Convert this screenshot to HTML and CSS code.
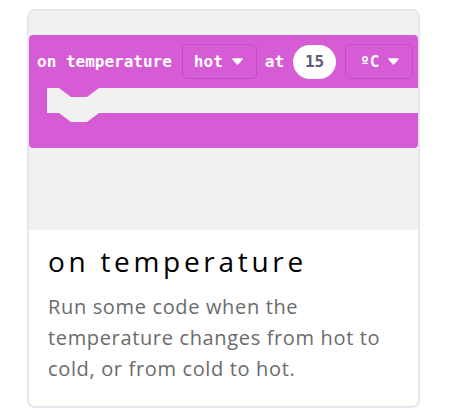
FILE: index.html
```html
<!DOCTYPE html>
<html>
<head>
<meta charset="utf-8">
<link rel="stylesheet" href="styles.css">
</head>
<body>
<div class="card">
  <div class="preview">
    <div class="block">
      <div class="block-head">
        <span class="label">on temperature</span>
        <span class="dropdown">hot <svg class="caret" width="11" height="7" viewBox="0 0 11 7"><path d="M1 1 L10 1 L5.5 6 Z" fill="#fff" stroke="#fff" stroke-width="1.5" stroke-linejoin="round"/></svg></span>
        <span class="label">at</span>
        <span class="pill">15</span>
        <span class="dropdown">ºC <svg class="caret" width="11" height="7" viewBox="0 0 11 7"><path d="M1 1 L10 1 L5.5 6 Z" fill="#fff" stroke="#fff" stroke-width="1.5" stroke-linejoin="round"/></svg></span>
      </div>
      <div class="block-mid">
        <div class="arm"></div>
        <div class="slot"><div class="tab"></div></div>
      </div>
      <div class="block-foot"><div class="notch"></div></div>
    </div>
  </div>
  <div class="info">
    <h2 class="title">on temperature</h2>
    <p class="desc">Run some code when the temperature changes from hot to cold, or from cold to hot.</p>
  </div>
</div>
</body>
</html>
```

FILE: styles.css
```css
html, body {
  margin: 0;
  padding: 0;
  background: #ffffff;
}
body {
  padding: 9px 0 0 27px;
}
.card {
  box-sizing: border-box;
  width: 393px;
  height: 399px;
  border: 2px solid #e4e8ee;
  border-radius: 8px;
  overflow: hidden;
  background: #ffffff;
}
.preview {
  height: 219px;
  background: #f1f1f1;
  padding-top: 24px;
  box-sizing: border-box;
}
.block {
  width: 100%;
}
.block-head {
  height: 53px;
  background: #d65cd6;
  border-radius: 4px 4px 0 0;
  display: flex;
  align-items: center;
  padding-left: 8px;
  font-family: "DejaVu Sans Mono", monospace;
  font-weight: bold;
  font-size: 16px;
  color: #ffffff;
  box-sizing: border-box;
}
.label {
  line-height: 1;
}
.dropdown {
  height: 35px;
  box-sizing: border-box;
  border: 1px solid #bf4fbf;
  border-radius: 5px;
  display: flex;
  align-items: center;
  gap: 9px;
  padding: 0 13px 0 11px;
  margin-left: 10px;
}
.label + .pill {
  margin-left: 9px;
}
.dropdown + .label {
  margin-left: 8px;
}
.pill + .dropdown {
  margin-left: 9px;
  padding: 0 13px 0 14px;
}
.caret {
  display: block;
}
.pill {
  width: 43px;
  height: 34px;
  border-radius: 17px;
  background: #ffffff;
  color: #575e75;
  display: flex;
  align-items: center;
  justify-content: center;
}
.block-mid {
  display: flex;
  height: 25px;
}
.arm {
  width: 18px;
  background: #d65cd6;
}
.slot {
  flex: 1;
  background: #f1f1f1;
  border-radius: 5px 0 0 5px;
  position: relative;
}
.tab {
  position: absolute;
  left: 12px;
  top: 0;
  width: 40px;
  height: 9px;
  background: #d65cd6;
  clip-path: polygon(0 0, 12px 100%, 28px 100%, 100% 0);
}
.block-foot {
  height: 35px;
  background: #d65cd6;
  border-radius: 0 0 4px 4px;
  position: relative;
}
.notch {
  position: absolute;
  left: 30px;
  top: 0;
  width: 40px;
  height: 9px;
  background: #f1f1f1;
  clip-path: polygon(0 0, 12px 100%, 28px 100%, 100% 0);
}
.info {
  padding: 14px 10px 0 19px;
}
.title {
  margin: 0;
  font-family: "Open Sans", sans-serif;
  font-weight: normal;
  font-size: 28px;
  line-height: 34px;
  letter-spacing: 3.7px;
  color: #000000;
}
.desc {
  margin: 13px 0 0 0;
  font-family: "Open Sans", sans-serif;
  font-size: 20px;
  line-height: 31px;
  letter-spacing: 0.65px;
  color: #6b6b6b;
}
```
